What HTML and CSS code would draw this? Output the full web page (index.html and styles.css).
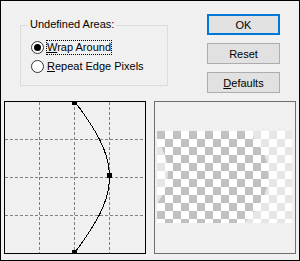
FILE: index.html
```html
<!DOCTYPE html>
<html lang="en">
<head>
    <meta charset="UTF-8">
    <title>Wave</title>
    <link rel="stylesheet" href="styles.css">
</head>
<body>

<div class="dialog">
    <div class="top">
        <div class="group">
            <span class="legend">Undefined Areas:</span>
            <label class="radio checked"><span class="dot"></span><span class="caption focus"><u>W</u>rap Around</span></label>
            <label class="radio"><span class="dot"></span><span class="caption"><u>R</u>epeat Edge Pixels</span></label>
        </div>
        <div class="buttons">
            <button class="btn default">OK</button>
            <button class="btn">Reset</button>
            <button class="btn"><u>D</u>efaults</button>
        </div>
    </div>

    <div class="bottom">
        <!-- curve editor -->
        <svg class="graph" width="142" height="153" viewBox="0 0 142 153">
            <rect x="0.5" y="0.5" width="141" height="152" fill="#f0f0f0" stroke="#000"/>
            <g stroke="#808080" stroke-dasharray="3 2">
                <line x1="35.5" y1="1" x2="35.5" y2="152"/>
                <line x1="70.5" y1="1" x2="70.5" y2="152"/>
                <line x1="105.5" y1="1" x2="105.5" y2="152"/>
                <line x1="1" y1="38.5" x2="141" y2="38.5"/>
                <line x1="1" y1="76.5" x2="141" y2="76.5"/>
                <line x1="1" y1="114.5" x2="141" y2="114.5"/>
            </g>
            <polyline class="curve" fill="none" stroke="#000" points="70.5,1 76.3,8 81.9,16 87.2,24 92,32 96.3,40 99.8,48 102.6,56 104.4,64 105.4,72 105.5,76 105.4,80 104.4,88 102.6,96 99.8,104 96.3,112 92,120 87.2,128 81.9,136 76.3,144 70.5,152"/>
            <rect x="68" y="0" width="5" height="4" fill="#000"/>
            <rect x="103" y="72" width="5" height="5" fill="#000"/>
            <rect x="68" y="149" width="5" height="4" fill="#000"/>
        </svg>

        <!-- preview -->
        <div class="preview">
            <svg width="135" height="92" viewBox="0 0 135 92">
                <defs>
                    <pattern id="checks" width="16" height="16" patternUnits="userSpaceOnUse">
                        <rect width="16" height="16" fill="#fff"/>
                        <rect width="8" height="8" fill="#c1c1c1"/>
                        <rect x="8" y="8" width="8" height="8" fill="#c1c1c1"/>
                    </pattern>
                </defs>
                <rect width="135" height="92" fill="url(#checks)"/>
                <path d="M0 9 Q22 41 0 73 Z" fill="#fff" fill-opacity="0.6"/>
                <path d="M91 0 Q134 46 87 92 L135 92 L135 0 Z" fill="#fff" fill-opacity="0.6"/>
            </svg>
        </div>
    </div>
</div>

</body>
</html>
```

FILE: styles.css
```css
body {
    margin: 0;
    font-family: "Liberation Sans", Arial, sans-serif;
    font-size: 11px;
    color: #000;
}
.dialog {
    width: 300px;
    height: 261px;
    box-sizing: border-box;
    border: 1px solid #000;
    background: #f0f0f0;
    padding: 0 3px;
}
.top {
    display: flex;
    height: 100px;
}
.group {
    position: relative;
    box-sizing: border-box;
    width: 148px;
    height: 61px;
    margin: 24px 0 0 16px;
    border: 1px solid #dcdcdc;
    padding: 12px 0 0 10px;
}
.legend {
    position: absolute;
    top: -8px;
    left: 7px;
    padding: 0 2px;
    background: #f0f0f0;
    line-height: 13px;
}
.radio {
    display: flex;
    align-items: center;
    height: 19px;
}
.dot {
    display: flex;
    align-items: center;
    justify-content: center;
    width: 13px;
    height: 13px;
    box-sizing: border-box;
    border: 1px solid #333;
    border-radius: 50%;
    background: #fff;
    margin-right: 2px;
}
.radio.checked .dot::after {
    content: "";
    width: 7px;
    height: 7px;
    border-radius: 50%;
    background: #000;
}
.caption {
    line-height: 13px;
    border: 1px dotted transparent;
}
.caption.focus {
    border-color: #000;
}
.buttons {
    display: flex;
    flex-direction: column;
    gap: 8px;
    margin: 13px 16px 0 auto;
}
.btn {
    width: 73px;
    height: 21px;
    box-sizing: border-box;
    border: 1px solid #adadad;
    background: #e1e1e1;
    font: inherit;
    color: #000;
    padding: 0;
}
.btn.default {
    border: 2px solid #0078d7;
}
.bottom {
    display: flex;
    gap: 8px;
}
.graph {
    display: block;
}
.curve {
    shape-rendering: crispEdges;
}
.preview {
    width: 142px;
    height: 153px;
    box-sizing: border-box;
    border: 1px solid #6e6e6e;
    padding: 29px 0 0 2px;
}
.preview svg {
    display: block;
}
```
